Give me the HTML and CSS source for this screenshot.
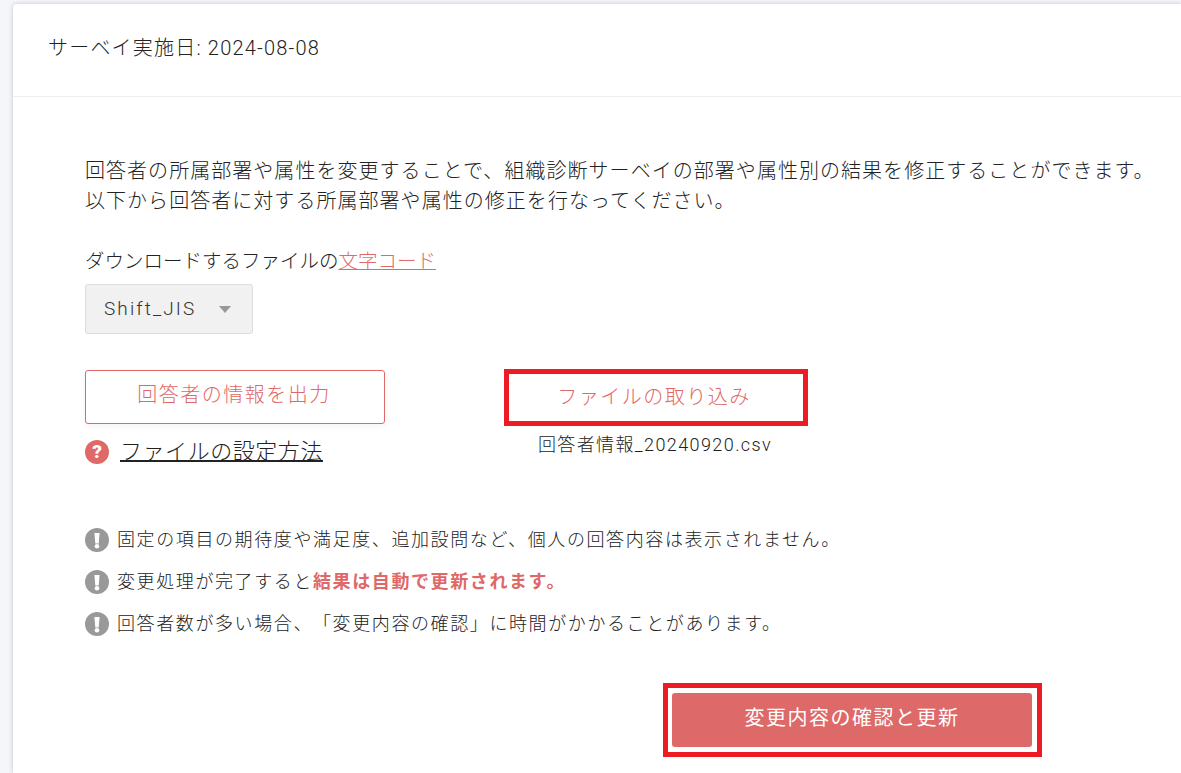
FILE: index.html
```html
<!DOCTYPE html>
<html lang="ja">
<head>
    <meta charset="UTF-8">
    <meta name="viewport" content="width=device-width, initial-scale=1.0">
    <title>回答者情報の修正</title>
    <link rel="stylesheet" href="styles.css">
</head>
<body>
    <div class="card">
        <div class="card-header">サーベイ実施日: 2024-08-08</div>

        <div class="card-body">
            <p class="lead">
                回答者の所属部署や属性を変更することで、組織診断サーベイの部署や属性別の結果を修正することができます。<br>
                以下から回答者に対する所属部署や属性の修正を行なってください。
            </p>

            <div class="encoding-label">ダウンロードするファイルの<a href="#" class="link-red">文字コード</a></div>
            <div class="select-box">
                <span class="select-value">Shift_JIS</span>
                <span class="select-arrow"></span>
            </div>

            <div class="file-actions">
                <div class="file-col">
                    <button class="btn-outline">回答者の情報を出力</button>
                    <div class="help-row">
                        <span class="help-icon">?</span>
                        <a href="#" class="help-link">ファイルの設定方法</a>
                    </div>
                </div>
                <div class="file-col file-col-upload">
                    <button class="btn-upload">ファイルの取り込み</button>
                    <div class="file-name">回答者情報_20240920.csv</div>
                </div>
            </div>

            <ul class="notes">
                <li class="note-item">
                    <svg class="note-icon" viewBox="0 0 24 24"><circle cx="12" cy="12" r="12" fill="#999"/><path d="M9.4 5h5.2l-.9 10.5h-3.4z" fill="#fff"/><circle cx="12" cy="18.2" r="2.3" fill="#fff"/></svg>
                    <span class="note-text">固定の項目の期待度や満足度、追加設問など、個人の回答内容は表示されません。</span>
                </li>
                <li class="note-item">
                    <svg class="note-icon" viewBox="0 0 24 24"><circle cx="12" cy="12" r="12" fill="#999"/><path d="M9.4 5h5.2l-.9 10.5h-3.4z" fill="#fff"/><circle cx="12" cy="18.2" r="2.3" fill="#fff"/></svg>
                    <span class="note-text">変更処理が完了すると<strong class="note-strong">結果は自動で更新されます。</strong></span>
                </li>
                <li class="note-item">
                    <svg class="note-icon" viewBox="0 0 24 24"><circle cx="12" cy="12" r="12" fill="#999"/><path d="M9.4 5h5.2l-.9 10.5h-3.4z" fill="#fff"/><circle cx="12" cy="18.2" r="2.3" fill="#fff"/></svg>
                    <span class="note-text">回答者数が多い場合、「変更内容の確認」に時間がかかることがあります。</span>
                </li>
            </ul>

            <div class="submit-row">
                <div class="submit-frame">
                    <button class="btn-submit">変更内容の確認と更新</button>
                </div>
            </div>
        </div>
    </div>
</body>
</html>
```

FILE: styles.css
```css
* {
    margin: 0;
    padding: 0;
    box-sizing: border-box;
}

html, body {
    height: 100%;
    overflow: hidden;
}

body {
    font-family: Roboto, 'Noto Sans CJK JP', sans-serif;
    background: #f5f6fa;
    color: #333;
    padding: 4px 0 0 13px;
    text-spacing-trim: space-all;
}

.card {
    height: 100%;
    background: #fff;
    border-radius: 4px 0 0 0;
    box-shadow: 0 0 5px rgba(0, 0, 0, 0.2);
    overflow: hidden;
}

.card-header {
    height: 93px;
    padding: 31px 0 0 35px;
    font-size: 20px;
    line-height: 26px;
    letter-spacing: 1.2px;
    font-weight: 300;
    color: #222;
    border-bottom: 1px solid #eee;
}

.card-body {
    padding: 59px 0 0 72px;
}

.lead {
    font-size: 20px;
    line-height: 30px;
    letter-spacing: 1.04px;
    font-weight: 300;
    color: #222;
}

.encoding-label {
    margin-top: 31px;
    font-size: 19.5px;
    line-height: 30px;
    font-weight: 300;
    color: #222;
}

.link-red {
    color: #df6868;
}

.select-box {
    display: flex;
    align-items: center;
    width: 168px;
    height: 50px;
    margin-top: 7px;
    padding: 0 0 2px 18px;
    background: #f1f1f1;
    border: 1px solid #ddd;
    border-radius: 3px;
    font-size: 19px;
    letter-spacing: 2.1px;
    font-weight: 300;
}

.select-arrow {
    width: 0;
    height: 0;
    margin: 3px 0 0 23px;
    border-left: 6px solid transparent;
    border-right: 6px solid transparent;
    border-top: 7px solid #999;
}

.file-actions {
    display: flex;
    align-items: flex-start;
    margin-top: 36px;
}

.file-col {
    width: 300px;
}

.file-col-upload {
    width: 304px;
    margin-left: 119px;
    margin-top: -1px;
}

.btn-outline {
    display: block;
    width: 300px;
    height: 54px;
    padding: 0 2px 8px 0;
    background: #fff;
    color: #df6868;
    border: 1px solid #df6868;
    border-radius: 3px;
    font-family: inherit;
    font-size: 20px;
    font-weight: 300;
    letter-spacing: 1.5px;
    box-shadow: 0 2px 8px rgba(0, 0, 0, 0.05);
}

.btn-upload {
    display: block;
    width: 304px;
    height: 57px;
    padding: 0 4px 4px 0;
    background: #fff;
    color: #df6868;
    border: 5px solid #ed1c24;
    font-family: inherit;
    font-size: 20px;
    font-weight: 300;
    letter-spacing: 1.5px;
}

.help-row {
    display: flex;
    align-items: center;
    margin-top: 14px;
}

.help-icon {
    width: 24px;
    height: 24px;
    border-radius: 50%;
    background: #df6868;
    color: #fff;
    font-size: 19px;
    font-weight: 900;
    line-height: 24px;
    text-align: center;
}

.help-link {
    margin-left: 11px;
    font-size: 22px;
    line-height: 28px;
    letter-spacing: 0.55px;
    font-weight: 300;
    color: #222;
    text-decoration-thickness: 2px;
}

.file-name {
    margin-top: 6px;
    padding-right: 2px;
    font-size: 18px;
    line-height: 26px;
    font-weight: 300;
    letter-spacing: 1.4px;
    text-align: center;
    color: #222;
}

.notes {
    list-style: none;
    margin-top: 62px;
}

.note-item {
    display: flex;
    align-items: center;
    height: 24px;
    margin-bottom: 18px;
    font-size: 18px;
    font-weight: 300;
    letter-spacing: 1.6px;
    color: #222;
}

.note-text {
    padding-bottom: 5px;
}

.note-icon {
    flex: none;
    width: 24px;
    height: 24px;
    margin-right: 8px;
}

.note-strong {
    color: #df6868;
    font-weight: 700;
}

.submit-row {
    margin-top: 47px;
    padding-left: 578px;
}

.submit-frame {
    width: 379px;
    height: 74px;
    padding: 5px 0 0 4px;
    border: 5px solid #ed1c24;
}

.btn-submit {
    display: block;
    width: 360px;
    height: 54px;
    padding-bottom: 8px;
    background: #dd6969;
    color: #fff;
    border: none;
    border-radius: 3px;
    font-family: inherit;
    font-size: 20px;
    font-weight: 400;
    letter-spacing: 1.5px;
}
```
